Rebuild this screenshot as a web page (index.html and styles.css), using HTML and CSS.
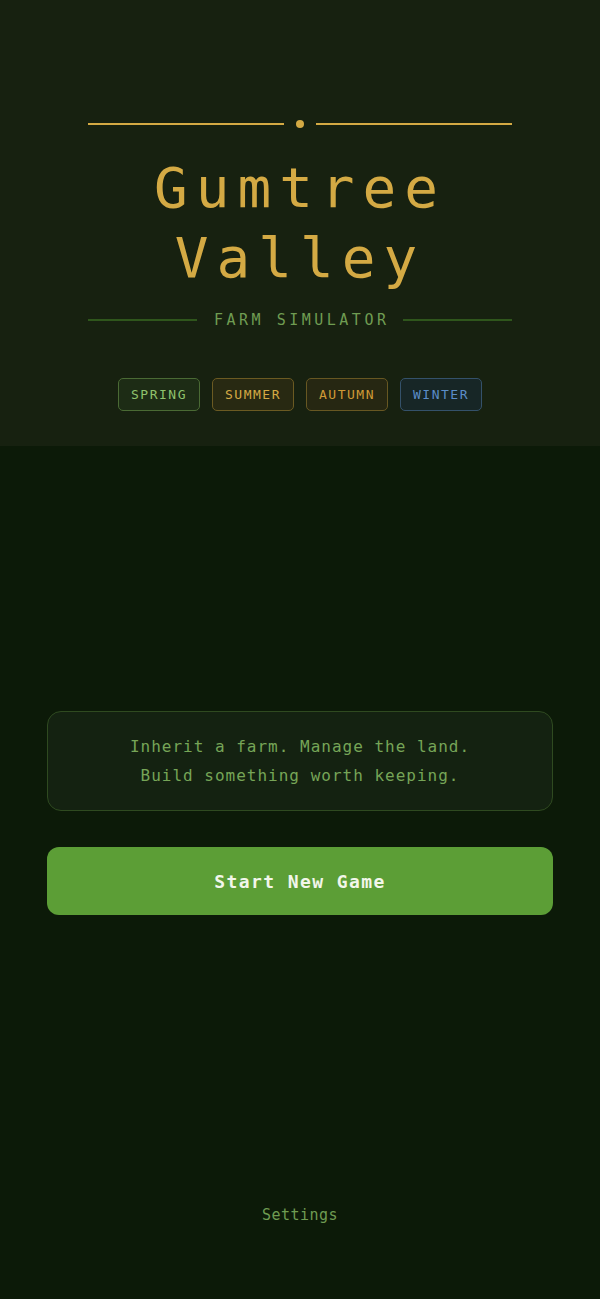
FILE: index.html
```html
<!DOCTYPE html>
<html lang="en">
<head>
<meta charset="utf-8">
<title>Gumtree Valley</title>
<link rel="stylesheet" href="styles.css">
</head>
<body>
<div class="app">
  <header class="hero">
    <div class="ornament">
      <span class="orn-line"></span>
      <span class="orn-dot"></span>
      <span class="orn-line"></span>
    </div>
    <h1 class="title"><span>Gumtree</span><span>Valley</span></h1>
    <div class="subtitle-row">
      <span class="sub-line"></span>
      <span class="subtitle">FARM SIMULATOR</span>
      <span class="sub-line"></span>
    </div>
    <div class="seasons">
      <span class="tag tag-spring">SPRING</span>
      <span class="tag tag-summer">SUMMER</span>
      <span class="tag tag-autumn">AUTUMN</span>
      <span class="tag tag-winter">WINTER</span>
    </div>
  </header>
  <main class="main">
    <div class="content">
      <div class="intro">
        <p>Inherit a farm. Manage the land.</p>
        <p>Build something worth keeping.</p>
      </div>
      <button class="start">Start New Game</button>
    </div>
    <footer class="footer">
      <a class="settings">Settings</a>
    </footer>
  </main>
</div>
</body>
</html>
```

FILE: styles.css
```css
* { box-sizing: border-box; }
html, body {
  margin: 0;
  padding: 0;
  background: #0c1a08;
}
body {
  font-family: "DejaVu Sans Mono", "Liberation Mono", monospace;
  color: #6f9c52;
}
.app {
  width: 600px;
  min-height: 1299px;
  display: flex;
  flex-direction: column;
}
.hero {
  background: #172110;
  height: 446px;
  padding: 120px 88px 0;
  display: flex;
  flex-direction: column;
  align-items: stretch;
}
.ornament {
  display: flex;
  align-items: center;
  gap: 12px;
  height: 8px;
}
.orn-line {
  flex: 1;
  height: 2px;
  background: #d4aa44;
}
.orn-dot {
  width: 8px;
  height: 8px;
  border-radius: 50%;
  background: #d4aa44;
}
.title {
  margin: 25px 0 0;
  font-weight: 400;
  font-size: 56px;
  line-height: 70px;
  letter-spacing: 8px;
  color: #d4aa44;
  text-align: center;
  display: flex;
  flex-direction: column;
  align-items: center;
}
.subtitle-row {
  margin-top: 17px;
  display: flex;
  align-items: center;
  gap: 14px;
  height: 20px;
}
.sub-line {
  flex: 1;
  height: 2px;
  background: #2f561c;
}
.subtitle {
  font-size: 15px;
  letter-spacing: 3.5px;
  color: #6f9c52;
  padding-left: 3.5px;
}
.seasons {
  margin-top: 48px;
  display: flex;
  justify-content: center;
  gap: 12px;
}
.tag {
  width: 82px;
  height: 33px;
  display: flex;
  align-items: center;
  justify-content: center;
  border: 1px solid;
  border-radius: 5px;
  font-size: 13px;
  letter-spacing: 1.5px;
}
.tag-spring { color: #8fc26c; border-color: #4a6a34; background: #1d2c15; }
.tag-summer { color: #d4aa44; border-color: #6b5a22; background: #282912; }
.tag-autumn { color: #d09a36; border-color: #675722; background: #262712; }
.tag-winter { color: #5b8dc8; border-color: #34516a; background: #172626; }
.main {
  flex: 1;
  display: flex;
  flex-direction: column;
}
.content {
  padding: 265px 47px 0;
  display: flex;
  flex-direction: column;
  gap: 36px;
}
.intro {
  height: 100px;
  border: 1px solid #2f4a20;
  border-radius: 14px;
  background: #142211;
  display: flex;
  flex-direction: column;
  justify-content: center;
  align-items: center;
  gap: 9px;
}
.intro p {
  margin: 0;
  font-size: 16px;
  line-height: 20px;
  letter-spacing: 1px;
  color: #76a557;
}
.start {
  height: 68px;
  border: none;
  border-radius: 12px;
  background: #5c9e36;
  color: #f2f6ea;
  font-family: "DejaVu Sans Mono", "Liberation Mono", monospace;
  font-weight: 700;
  font-size: 18px;
  letter-spacing: 1.4px;
}
.footer {
  margin-top: auto;
  padding-bottom: 74px;
  text-align: center;
}
.settings {
  font-size: 15px;
  line-height: 20px;
  color: #6f9c52;
  letter-spacing: 0.5px;
}
```
